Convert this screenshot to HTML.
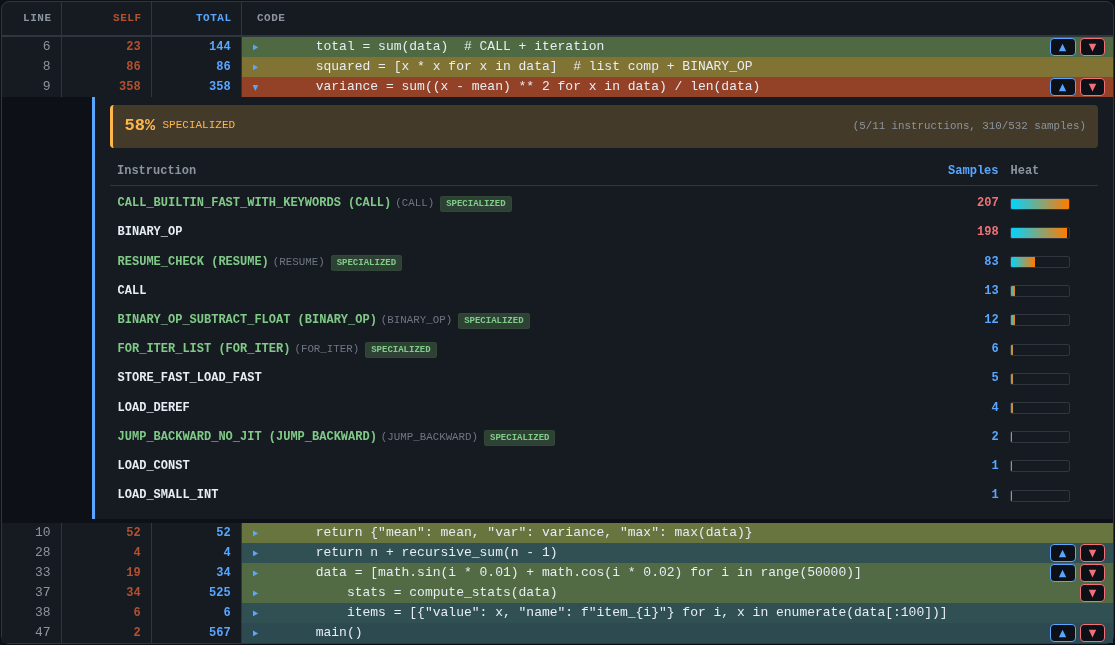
<!DOCTYPE html>
<html><head><meta charset="utf-8">
<style>

*{box-sizing:border-box;margin:0;padding:0}
html,body{width:1115px;height:645px;overflow:hidden;background:#0d1117;font-family:"Liberation Mono",monospace;}
#wrap{will-change:transform;position:absolute;left:1px;top:1px;width:1113px;height:643px;border:1px solid #30363d;border-radius:8px;background:#161b22;}
.hdr{position:absolute;left:0;top:0;width:1111px;height:35px;border-bottom:2px solid #30363d;}
.row{position:absolute;left:0;width:1111px;height:20px;}
.c{position:absolute;top:0;height:100%;}
.cl{left:0;width:60px;border-right:1px solid #30363d;text-align:right;padding-right:10px;}
.cs{left:60px;width:90px;border-right:1px solid #30363d;text-align:right;padding-right:10px;}
.ct{left:150px;width:90px;border-right:1px solid #30363d;text-align:right;padding-right:10px;}
.cc{left:240px;width:871px;}
.hdr .c{font-size:11px;font-weight:bold;letter-spacing:0.5px;line-height:33px;padding-right:9.5px}
.hdr .cl{color:#8b949e}
.hdr .cs{color:#b3512f}
.hdr .ct{color:#58a6ff}
.hdr .cc{color:#8b949e;padding-left:15px}
.row .c{font-size:13px;line-height:20px;}
.row .cl,.row .cs,.row .ct{background:#161b22}
.row .cl{color:#8b949e;padding-right:10.4px}
.row .cs{color:#b3512f;font-weight:bold;font-size:12px;padding-right:10.4px}
.row .ct{color:#58a6ff;font-weight:bold;font-size:12px;padding-right:10.4px}
.row .cc{color:#e6edf3;white-space:pre}
.tog{position:absolute;left:0;top:0}
.code{position:absolute;left:42.5px;top:0;}
.btns{position:absolute;right:8px;top:1px;height:18px;}
.b{position:absolute;top:0;width:25px;height:18px;border:1px solid;border-radius:4px;background:#0d1117;}
.bu{right:29px;width:26px;border-color:#58a6ff}
.bd{right:0;border-color:#f27178}
.b svg{position:absolute;left:7px;top:4px}
#exp{position:absolute;left:0;top:95px;width:1111px;height:426px;background:#0d1117;}
#panel{position:absolute;left:90px;top:0;width:1021px;height:422px;border-left:3px solid #58a6ff;background:#161b22;}
#spec{position:absolute;left:15px;top:8px;width:988px;height:43px;background:rgba(255,183,77,0.2);border-left:3px solid #ffb74d;border-radius:4px;}
#spec .pct{position:absolute;left:11.5px;top:-1px;line-height:43px;font-size:17px;font-weight:bold;color:#ffb74d}
#spec .lbl{position:absolute;left:49.5px;top:-1px;line-height:43px;font-size:11px;color:#ffb74d}
#spec .sum{position:absolute;right:12px;top:0;line-height:43px;font-size:10.8px;color:#8b949e}
#it{position:absolute;left:15px;top:51px;width:988px;}
.ih{position:absolute;left:0;top:0;width:988px;height:38px;border-bottom:1px solid #30363d;font-size:12px;font-weight:bold;line-height:37px;color:#8b949e}
.ir{position:absolute;left:0;width:988px;height:29.2px;font-size:12px;line-height:29.2px;}
.in{position:absolute;left:7.6px;top:3.25px;font-weight:bold;color:#e6edf3;white-space:pre}
.in.g{color:#80c987}
.base{font-size:10.8px;font-weight:normal;color:#6e7681;margin-left:4px}
.badge{display:inline-block;font-size:9px;font-weight:bold;color:#80cc88;background:#2d4134;box-shadow:inset 0 0 0 1px #314837;border-radius:3px;height:16px;line-height:17px;padding:0 6px 0 6px;margin-left:6px;vertical-align:0}
.smp{position:absolute;right:99.4px;top:3.25px;font-weight:bold;text-align:right;color:#58a6ff}
.smp.hot{color:#f27178}
.heat{position:absolute;left:900px;top:11.6px;width:60px;height:12px;border:1px solid #30363d;border-radius:2px;overflow:hidden}
.heat i{display:block;height:100%;background:linear-gradient(90deg,#00d4ff,#ff7b00)}
.h1{position:absolute;left:7px;top:5px}.h2{position:absolute;right:99.5px;top:5px;color:#58a6ff}.h3{position:absolute;left:900.5px;top:5px}
</style></head><body>
<div id="wrap">
 <div class="hdr">
  <div class="c cl">LINE</div><div class="c cs">SELF</div><div class="c ct">TOTAL</div><div class="c cc">CODE</div>
 </div>
<div class="row" style="top:35px"><div class="c cl">6</div><div class="c cs">23</div><div class="c ct">144</div><div class="c cc" style="background:#4f6a42"><svg class="tog" width="20" height="20" viewBox="0 0 20 20"><path d="M11 7.6V13.3L16.2 10.45z" fill="#58a6ff"/></svg><span class="code">    total = sum(data)  # CALL + iteration</span><div class="btns"><div class="b bu"><svg width="9" height="9" viewBox="0 0 9 9"><path d="M4.55 0.75L8.2 8.25H0.9z" fill="#58a6ff"/></svg></div><div class="b bd"><svg width="9" height="9" viewBox="0 0 9 9"><path d="M0.8 0.75H8.2L4.5 8.4z" fill="#f27178"/></svg></div></div></div></div>
<div class="row" style="top:55px"><div class="c cl">8</div><div class="c cs">86</div><div class="c ct">86</div><div class="c cc" style="background:#807333"><svg class="tog" width="20" height="20" viewBox="0 0 20 20"><path d="M11 7.6V13.3L16.2 10.45z" fill="#58a6ff"/></svg><span class="code">    squared = [x * x for x in data]  # list comp + BINARY_OP</span></div></div>
<div class="row" style="top:75px"><div class="c cl">9</div><div class="c cs">358</div><div class="c ct">358</div><div class="c cc" style="background:#934127"><svg class="tog" width="20" height="20" viewBox="0 0 20 20"><path d="M10.6 8H16.2L13.4 14z" fill="#58a6ff"/></svg><span class="code">    variance = sum((x - mean) ** 2 for x in data) / len(data)</span><div class="btns"><div class="b bu"><svg width="9" height="9" viewBox="0 0 9 9"><path d="M4.55 0.75L8.2 8.25H0.9z" fill="#58a6ff"/></svg></div><div class="b bd"><svg width="9" height="9" viewBox="0 0 9 9"><path d="M0.8 0.75H8.2L4.5 8.4z" fill="#f27178"/></svg></div></div></div></div>
<div id="exp"><div id="panel">
<div id="spec"><span class="pct">58%</span><span class="lbl">SPECIALIZED</span><span class="sum">(5/11 instructions, 310/532 samples)</span></div>
<div id="it"><div class="ih"><span class="h1">Instruction</span><span class="h2">Samples</span><span class="h3">Heat</span></div>
<div class="ir" style="top:38.00px"><span class="in g">CALL_BUILTIN_FAST_WITH_KEYWORDS (CALL)<span class="base">(CALL)</span><span class="badge">SPECIALIZED</span></span><span class="smp hot">207</span><span class="heat"><i style="width:100%"></i></span></div>
<div class="ir" style="top:67.20px"><span class="in">BINARY_OP</span><span class="smp hot">198</span><span class="heat"><i style="width:56px"></i></span></div>
<div class="ir" style="top:96.40px"><span class="in g">RESUME_CHECK (RESUME)<span class="base">(RESUME)</span><span class="badge">SPECIALIZED</span></span><span class="smp">83</span><span class="heat"><i style="width:24px"></i></span></div>
<div class="ir" style="top:125.60px"><span class="in">CALL</span><span class="smp">13</span><span class="heat"><i style="width:4px"></i></span></div>
<div class="ir" style="top:154.80px"><span class="in g">BINARY_OP_SUBTRACT_FLOAT (BINARY_OP)<span class="base">(BINARY_OP)</span><span class="badge">SPECIALIZED</span></span><span class="smp">12</span><span class="heat"><i style="width:4px"></i></span></div>
<div class="ir" style="top:184.00px"><span class="in g">FOR_ITER_LIST (FOR_ITER)<span class="base">(FOR_ITER)</span><span class="badge">SPECIALIZED</span></span><span class="smp">6</span><span class="heat"><i style="width:2px"></i></span></div>
<div class="ir" style="top:213.20px"><span class="in">STORE_FAST_LOAD_FAST</span><span class="smp">5</span><span class="heat"><i style="width:2px"></i></span></div>
<div class="ir" style="top:242.40px"><span class="in">LOAD_DEREF</span><span class="smp">4</span><span class="heat"><i style="width:2px"></i></span></div>
<div class="ir" style="top:271.60px"><span class="in g">JUMP_BACKWARD_NO_JIT (JUMP_BACKWARD)<span class="base">(JUMP_BACKWARD)</span><span class="badge">SPECIALIZED</span></span><span class="smp">2</span><span class="heat"><i style="width:1px"></i></span></div>
<div class="ir" style="top:300.80px"><span class="in">LOAD_CONST</span><span class="smp">1</span><span class="heat"><i style="width:1px"></i></span></div>
<div class="ir" style="top:330.00px"><span class="in">LOAD_SMALL_INT</span><span class="smp">1</span><span class="heat"><i style="width:1px"></i></span></div>
</div></div></div>
<div class="row" style="top:521px"><div class="c cl">10</div><div class="c cs">52</div><div class="c ct">52</div><div class="c cc" style="background:#68753f"><svg class="tog" width="20" height="20" viewBox="0 0 20 20"><path d="M11 7.6V13.3L16.2 10.45z" fill="#58a6ff"/></svg><span class="code">    return {&quot;mean&quot;: mean, &quot;var&quot;: variance, &quot;max&quot;: max(data)}</span></div></div>
<div class="row" style="top:541px"><div class="c cl">28</div><div class="c cs">4</div><div class="c ct">4</div><div class="c cc" style="background:#305054"><svg class="tog" width="20" height="20" viewBox="0 0 20 20"><path d="M11 7.6V13.3L16.2 10.45z" fill="#58a6ff"/></svg><span class="code">    return n + recursive_sum(n - 1)</span><div class="btns"><div class="b bu"><svg width="9" height="9" viewBox="0 0 9 9"><path d="M4.55 0.75L8.2 8.25H0.9z" fill="#58a6ff"/></svg></div><div class="b bd"><svg width="9" height="9" viewBox="0 0 9 9"><path d="M0.8 0.75H8.2L4.5 8.4z" fill="#f27178"/></svg></div></div></div></div>
<div class="row" style="top:561px"><div class="c cl">33</div><div class="c cs">19</div><div class="c ct">34</div><div class="c cc" style="background:#526b44"><svg class="tog" width="20" height="20" viewBox="0 0 20 20"><path d="M11 7.6V13.3L16.2 10.45z" fill="#58a6ff"/></svg><span class="code">    data = [math.sin(i * 0.01) + math.cos(i * 0.02) for i in range(50000)]</span><div class="btns"><div class="b bu"><svg width="9" height="9" viewBox="0 0 9 9"><path d="M4.55 0.75L8.2 8.25H0.9z" fill="#58a6ff"/></svg></div><div class="b bd"><svg width="9" height="9" viewBox="0 0 9 9"><path d="M0.8 0.75H8.2L4.5 8.4z" fill="#f27178"/></svg></div></div></div></div>
<div class="row" style="top:581px"><div class="c cl">37</div><div class="c cs">34</div><div class="c ct">525</div><div class="c cc" style="background:#526b44"><svg class="tog" width="20" height="20" viewBox="0 0 20 20"><path d="M11 7.6V13.3L16.2 10.45z" fill="#58a6ff"/></svg><span class="code">        stats = compute_stats(data)</span><div class="btns"><div class="b bd"><svg width="9" height="9" viewBox="0 0 9 9"><path d="M0.8 0.75H8.2L4.5 8.4z" fill="#f27178"/></svg></div></div></div></div>
<div class="row" style="top:601px"><div class="c cl">38</div><div class="c cs">6</div><div class="c ct">6</div><div class="c cc" style="background:#305054"><svg class="tog" width="20" height="20" viewBox="0 0 20 20"><path d="M11 7.6V13.3L16.2 10.45z" fill="#58a6ff"/></svg><span class="code">        items = [{&quot;value&quot;: x, &quot;name&quot;: f&quot;item_{i}&quot;} for i, x in enumerate(data[:100])]</span></div></div>
<div class="row" style="top:621px"><div class="c cl">47</div><div class="c cs">2</div><div class="c ct">567</div><div class="c cc" style="background:#2c4a50"><svg class="tog" width="20" height="20" viewBox="0 0 20 20"><path d="M11 7.6V13.3L16.2 10.45z" fill="#58a6ff"/></svg><span class="code">    main()</span><div class="btns"><div class="b bu"><svg width="9" height="9" viewBox="0 0 9 9"><path d="M4.55 0.75L8.2 8.25H0.9z" fill="#58a6ff"/></svg></div><div class="b bd"><svg width="9" height="9" viewBox="0 0 9 9"><path d="M0.8 0.75H8.2L4.5 8.4z" fill="#f27178"/></svg></div></div></div></div>
</div>
</body></html>
